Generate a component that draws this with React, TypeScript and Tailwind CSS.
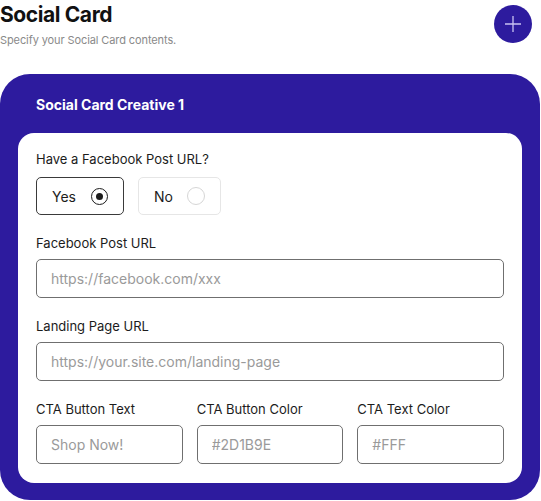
import React, { useState } from 'react';

type Answer = 'yes' | 'no';

const font = { fontFamily: 'Inter, "Noto Sans", sans-serif' };

const Field = ({ label, placeholder }: { label: string; placeholder: string }) => (
  <div className="flex flex-col gap-[8px]">
    <label className="text-[13px] leading-4 text-[#1c1c1c]">{label}</label>
    <input
      placeholder={placeholder}
      className="h-[39px] w-full rounded-[5px] border border-[#6f6f6f] bg-white px-[14px] text-[14px] text-[#222] outline-none placeholder:text-[#9a9a9a]"
    />
  </div>
);

const Choice = ({
  label,
  selected,
  onClick,
  width,
}: {
  label: string;
  selected: boolean;
  onClick: () => void;
  width: string;
}) => (
  <button
    onClick={onClick}
    className={`flex h-[38px] items-center justify-between rounded-[5px] border bg-white pl-[15px] pr-[15px] ${width} ${
      selected ? 'border-[#3a3a3a]' : 'border-[#e6e6e6]'
    }`}
  >
    <span className="text-[14px] text-[#1c1c1c]">{label}</span>
    {selected ? (
      <span className="flex h-[17px] w-[17px] items-center justify-center rounded-full border-[1.5px] border-[#1c1c1c]">
        <span className="h-[7px] w-[7px] rounded-full bg-[#1c1c1c]" />
      </span>
    ) : (
      <span className="h-[18px] w-[18px] rounded-full border border-[#d6d6d6]" />
    )}
  </button>
);

export default function App() {
  const [answer, setAnswer] = useState<Answer>('yes');

  return (
    <div className="h-[501px] w-[541px] overflow-hidden bg-white" style={font}>
      <div className="flex h-[74px] items-start justify-between pr-[9px]">
        <div className="pt-[1px]">
          <h1 className="text-[21px] font-bold leading-[28px] tracking-[-0.4px] text-[#111]">Social Card</h1>
          <p className="mt-[4px] text-[11px] leading-[14px] tracking-[-0.1px] text-[#8a8a8a]">Specify your Social Card contents.</p>
        </div>
        <button className="mt-[5px] flex h-[38px] w-[38px] items-center justify-center rounded-full bg-[#2D1B9E]">
          <svg width="18" height="18" viewBox="0 0 18 18" fill="none">
            <path d="M9 1v16M1 9h16" stroke="#c9c2f2" strokeWidth="1.3" />
          </svg>
        </button>
      </div>

      <div className="mr-[1px] rounded-[30px] bg-[#2D1B9E] px-[18px] pb-[17px]">
        <div className="flex h-[59px] items-center pl-[18px] pt-[1px]">
          <h2 className="text-[14px] font-bold text-white">Social Card Creative 1</h2>
        </div>

        <div className="flex flex-col gap-[20px] rounded-[16px] bg-white px-[18px] pb-[19px] pt-[18px]">
          <div className="flex flex-col gap-[10px]">
            <span className="text-[13px] leading-4 text-[#1c1c1c]">Have a Facebook Post URL?</span>
            <div className="flex gap-[14px]">
              <Choice label="Yes" selected={answer === 'yes'} onClick={() => setAnswer('yes')} width="w-[88px]" />
              <Choice label="No" selected={answer === 'no'} onClick={() => setAnswer('no')} width="w-[83px]" />
            </div>
          </div>

          <Field label="Facebook Post URL" placeholder="https://facebook.com/xxx" />
          <Field label="Landing Page URL" placeholder="https://your.site.com/landing-page" />

          <div className="grid grid-cols-3 gap-[14px]">
            <Field label="CTA Button Text" placeholder="Shop Now!" />
            <Field label="CTA Button Color" placeholder="#2D1B9E" />
            <Field label="CTA Text Color" placeholder="#FFF" />
          </div>
        </div>
      </div>
    </div>
  );
}
